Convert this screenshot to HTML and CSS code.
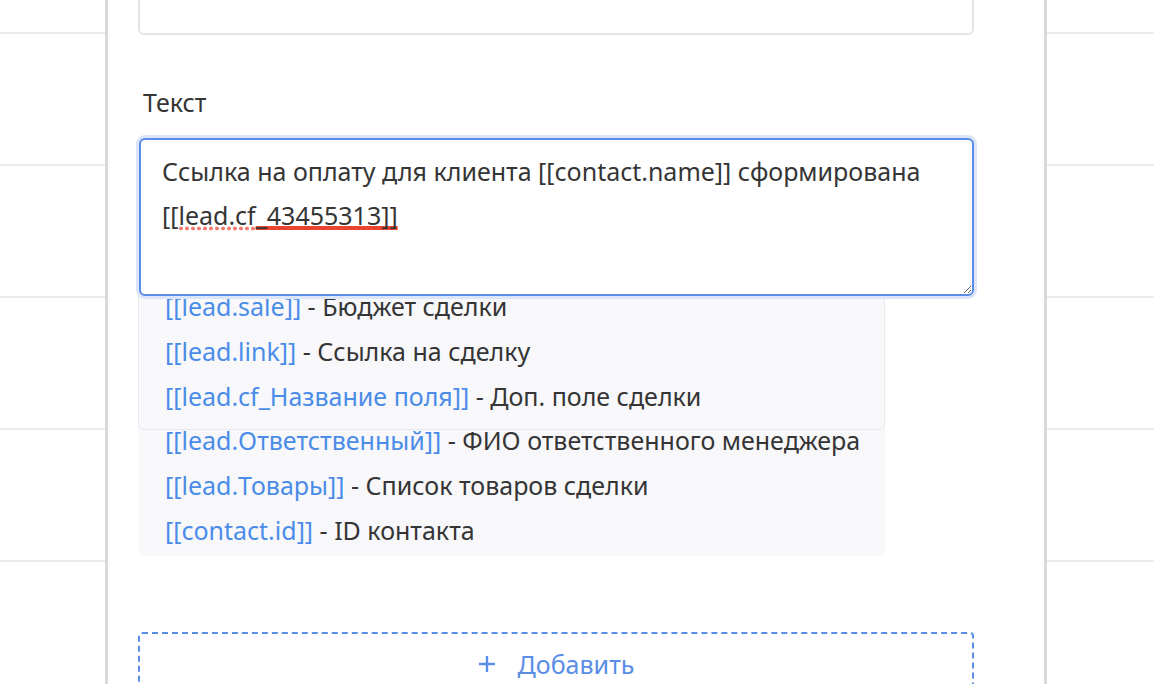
FILE: index.html
```html
<!DOCTYPE html>
<html lang="ru">
<head>
    <meta charset="UTF-8">
    <meta name="viewport" content="width=device-width, initial-scale=1.0">
    <title>Сообщение</title>
    <link rel="stylesheet" href="styles.css">
</head>
<body>
    <!-- table behind the side panel -->
    <div class="table">
        <div class="table-row"></div>
        <div class="table-row"></div>
        <div class="table-row"></div>
        <div class="table-row"></div>
        <div class="table-row"></div>
        <div class="table-row"></div>
    </div>

    <div class="panel">
        <div class="panel-body">
            <div class="input"></div>

            <label class="field-label">Текст</label>
            <div class="textarea">Ссылка на оплату для клиента [[contact.name]] сформирована [[<span class="spell-soft">lead.cf</span><span class="spell-err">_43455313]]</span></div>

            <div class="hints">
                <div class="hint"><span class="var">[[lead.sale]]</span> - Бюджет сделки</div>
                <div class="hint"><span class="var">[[lead.link]]</span> - Ссылка на сделку</div>
                <div class="hint"><span class="var">[[lead.cf_Название поля]]</span> - Доп. поле сделки</div>
                <div class="hint"><span class="var">[[lead.Ответственный]]</span> - ФИО ответственного менеджера</div>
                <div class="hint"><span class="var">[[lead.Товары]]</span> - Список товаров сделки</div>
                <div class="hint"><span class="var">[[contact.id]]</span> - ID контакта</div>
            </div>

            <button class="add-btn" type="button">
                <svg class="add-icon" width="18" height="18" viewBox="0 0 18 18">
                    <path d="M9 1v16M1 9h16" stroke="currentColor" stroke-width="2.4" fill="none"/>
                </svg>
                <span>Добавить</span>
            </button>
        </div>
    </div>
</body>
</html>
```

FILE: styles.css
```css
* {
    box-sizing: border-box;
}

body {
    margin: 0;
    height: 684px;
    overflow: hidden;
    position: relative;
    background: #fff;
    color: #353535;
    font-family: "Noto Sans", "Open Sans", sans-serif;
}

.table-row {
    height: 132px;
    border-bottom: 2px solid #ebebeb;
}

.table-row:first-child {
    height: 34px;
}

/* side panel sits on top of the table */
.panel {
    position: absolute;
    top: 0;
    bottom: 0;
    left: 105px;
    width: 942px;
    background: #fff;
    border-left: 3px solid #d6dada;
    border-right: 3px solid #d6dada;
    overflow: hidden;
}

.panel-body {
    padding: 0 70px 0 30px;
}

.input {
    height: 60px;
    margin-top: -25px;
    border: 2px solid #e4e4e8;
    border-radius: 6px;
}

.field-label {
    display: block;
    margin-top: 52px;
    padding-left: 5px;
    font-size: 25px;
    line-height: 30px;
}

.textarea {
    position: relative;
    z-index: 1;
    margin: 21px 0 0 1px;
    height: 158px;
    padding: 9px 21px;
    background: #fff;
    border: 2px solid #5a8de6;
    border-radius: 6px;
    box-shadow: 0 0 0 3px #dbe6fb;
    font-size: 25px;
    line-height: 44px;
    resize: vertical;
    overflow: auto;
}

/* round dots under the word, like the browser's grammar marker */
.spell-soft {
    background-image: radial-gradient(circle, #f27a6f 1.6px, transparent 2.2px);
    background-size: 6px 5px;
    background-repeat: repeat-x;
    background-position: 0 calc(100% - 1px);
}

.spell-err {
    text-decoration: underline solid #e8442f 4px;
    text-underline-offset: 1px;
    text-decoration-skip-ink: none;
}

.hints {
    position: relative;
    width: 747px;
    margin-top: -22px;
    padding: 10px 0 3px;
    background: #f8f8fb;
    border-radius: 6px;
}

.hints::before {
    content: "";
    position: absolute;
    top: 0;
    left: 0;
    right: 0;
    height: 154px;
    border: 1px solid #e8e8ee;
    border-radius: 6px;
    pointer-events: none;
}

.hint {
    padding-left: 27px;
    font-size: 25px;
    line-height: 44.8px;
    white-space: nowrap;
}

.var {
    color: #4a8ce8;
}

.add-btn {
    display: flex;
    align-items: center;
    justify-content: center;
    gap: 22px;
    width: 100%;
    height: 70px;
    margin-top: 76px;
    padding: 0 0 6px;
    background: #fff;
    border: 2px dashed #5a8de6;
    border-radius: 4px;
    color: #5a8de6;
    font-family: inherit;
    font-size: 25px;
}

.add-icon {
    display: block;
}
```
